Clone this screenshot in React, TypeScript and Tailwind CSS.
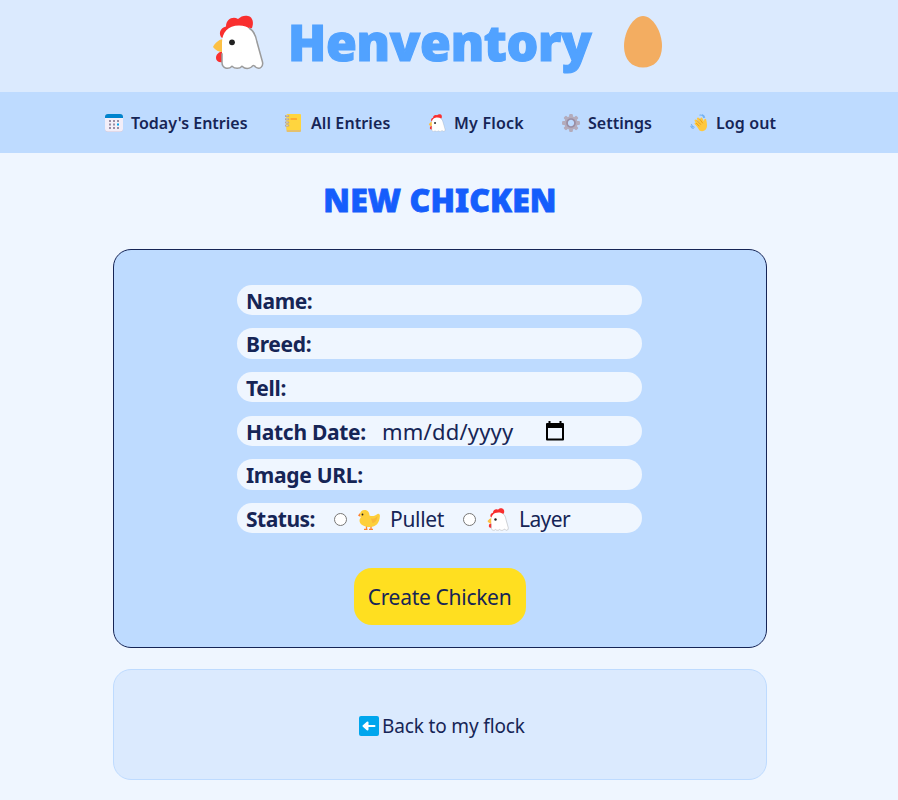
import React from "react";

type IconProps = { className?: string };

function Hen({ className, outline = 1 }: IconProps & { outline?: number }) {
  return (
    <svg viewBox="0 0 52 55" className={className}>
      <path d="M11 47c-4 1-7-1-7-4 0-4 3-6 7-7z" fill="#f92f2f" />
      <path d="M11 24C6 25 3 28 1 32c2 3 6 5 10 5z" fill="#fcc044" />
      <path d="M10 23C6 19 8 13 14 11.500 14 4 21 1 26 4c3-3 7-4 10-3 5 1 6 7 4 12L26 17z" fill="#f92f2f" />
      <path
        d="M10 28C10 17 16 10.500 27 10.500c10 0 15 6 17 15l6.500 21c1 5-3 8-7 5.500-1.500-1-2.500-1.500-4 0-3 2.500-6.500 2.500-9.500-.5-2.500 3-7 3-10 0-4 4-10 2-10-4z"
        fill="#fff"
      />
      <path
        d="M37 13c5 3 7 8 8 14l5.500 20c1 5-3 8-7 5-1.500-2-2.500-2-4 0-3 2-6.500 2-9.500-.8-2.500 2.800-7 2.800-10 0-4 4-10 2-10-4v-9"
        fill="none"
        stroke="#9b9b9b"
        strokeWidth={outline}
      />
      <circle cx="20" cy="27.300" r="2.900" fill="#212121" />
    </svg>
  );
}

function Egg({ className }: IconProps) {
  return (
    <svg viewBox="0 0 38 52" className={className}>
      <path d="M19 0c10 0 19 16 19 30 0 14-8 21.500-19 21.500S0 44 0 30C0 16 9 0 19 0z" fill="#f3ad61" />
    </svg>
  );
}

function Calendar({ className }: IconProps) {
  return (
    <svg viewBox="0 0 18 18" className={className}>
      <rect width="18" height="18" rx="3" fill="#cfc5d9" />
      <path d="M0 4h18v10.500a3 3 0 0 1-3 3H3a3 3 0 0 1-3-3z" fill="#f3eef8" />
      <path d="M0 4V3a3 3 0 0 1 3-3h12a3 3 0 0 1 3 3v1z" fill="#0084ce" />
      <path
        d="M8 6h2v2H8zM12 6h2v2h-2zM4 6h2v2H4zM4 9.500h2v2H4zM8 9.500h2v2H8zM4 13h2v2H4zM8 13h2v2H8zM12 13h2v2h-2z"
        fill="#998ea4"
      />
      <path d="M12 9.500h2v2h-2z" fill="#00a6ed" />
    </svg>
  );
}

function Ledger({ className }: IconProps) {
  return (
    <svg viewBox="0 0 18 18" className={className}>
      <rect x="1.500" y="2" width="14.500" height="16" rx="1" fill="#e5c16d" />
      <rect x="1.500" y="0" width="14.500" height="16" rx="1" fill="#ffd53e" />
      <rect x="5.500" y="4" width="6.500" height="2" rx=".5" fill="#ffab2e" />
      <path d="M.8 2h2.500M.8 5.200h2.500M.8 8.400h2.500M.8 11.600h2.500" stroke="#b3a58f" strokeWidth="2" strokeLinecap="round" />
      <path d="M.8 1.800h2.500M.8 5h2.500M.8 8.200h2.500M.8 11.400h2.500" stroke="#d9d4d6" strokeWidth=".8" />
    </svg>
  );
}

function Gear({ className }: IconProps) {
  return (
    <svg viewBox="-9 -9 18 18" className={className}>
      {[0, 45, 90, 135].map((a) => (
        <rect key={a} x="-1.900" y="-9" width="3.800" height="18" rx="1.200" fill="#b4acbc" transform={`rotate(${a})`} />
      ))}
      <circle r="6.700" fill="#b4acbc" />
      <circle r="4" fill="#bedbff" stroke="#998ea4" strokeWidth="1.700" />
    </svg>
  );
}

function Wave({ className }: IconProps) {
  return (
    <svg viewBox="0 0 19 19" className={className}>
      <path d="M10.500 1.200q3-.5 4 2.500M13 .7q2.200.8 2.500 3M1.500 11q.5 2.500 3 3M.8 13q1 2 2.700 2.200" fill="none" stroke="#74b2f3" strokeWidth="1.100" strokeLinecap="round" />
      <path d="M6 10l4 4M6 7l6 6M8.500 5l5 6M12 5l2.500 5" stroke="#ffc83d" strokeWidth="2.400" strokeLinecap="round" />
      <path d="M6 11L14.500 8q.5-4 2.500-2.500.7 2.500 1 6.500c0 5.500-4.500 7.500-8 5.500z" fill="#ffc83d" />
      <path d="M7.500 6.800l4 4.500M10 5l3.500 4.800M6.500 9.500l3.500 3.500" stroke="#d67d00" strokeWidth=".6" />
    </svg>
  );
}

function Chick({ className }: IconProps) {
  return (
    <svg viewBox="0 0 22 20" className={className}>
      <path d="M8.500 16v3M13 16v3M6 19.300h3.500M11 19.300h4" stroke="#ff822d" strokeWidth="1.300" fill="none" />
      <path d="M2 3L0 5.500 2.500 7z" fill="#ff822d" />
      <path
        d="M2 4.500C2 2 4 0 6.500 0 10 0 11.500 2.500 11.500 5.500c3 1.500 6 0 8-1.500 1.500-.7 2.500.5 2.400 2C21.500 13 18 17 12 17 6 17 2 14.500 1.500 11 1.300 8.500 3 8 2.800 7z"
        fill="#fdcf3b"
      />
      <path d="M13 8.500c3 .5 5-.5 6.500-2.500-.5 5-3 7-5 7" fill="#f9b938" />
      <circle cx="4.500" cy="4.500" r=".9" fill="#212121" />
    </svg>
  );
}

function BackArrow({ className }: IconProps) {
  return (
    <svg viewBox="0 0 20 20" className={className}>
      <rect width="20" height="20" rx="2" fill="#00a6ed" />
      <path d="M8.500 6.500v7L4.500 10zM8 10h7.500" stroke="#fff" strokeWidth="2" fill="#fff" strokeLinecap="round" strokeLinejoin="round" />
    </svg>
  );
}

function DateIcon({ className }: IconProps) {
  return (
    <svg viewBox="0 0 20 20" className={className}>
      <path d="M3.500 0h2v2h9V0h2v2H18a1 1 0 0 1 1 1v15.500a1 1 0 0 1-1 1H2a1 1 0 0 1-1-1V3a1 1 0 0 1 1-1h1.500zM3 7v10.500h14V7z" fill="#000" fillRule="evenodd" />
    </svg>
  );
}

const icon = "size-[18px] shrink-0";

const links = [
  { label: "Today's Entries", glyph: <Calendar className={icon} />, width: "w-[116px] tracking-[0px]" },
  { label: "All Entries", glyph: <Ledger className={icon} />, width: "w-[79px] tracking-[0.1px]" },
  { label: "My Flock", glyph: <Hen className={icon} outline={0.8} />, width: "w-[70px] tracking-[0.2px]" },
  { label: "Settings", glyph: <Gear className={icon} />, width: "w-[64px] tracking-[0px]" },
  { label: "Log out", glyph: <Wave className={icon} />, width: "w-[61px] tracking-[0.1px]" },
];

function Field({ label, track, children }: { label: string; track: string; children?: React.ReactNode }) {
  return (
    <div className="flex h-[30.4px] w-[405px] items-center rounded-full bg-blue-50 pl-[9px] text-[21px] leading-[30px] whitespace-nowrap">
      <span className={"mt-[1.600px] font-bold " + track}>{label}</span>
      {children}
    </div>
  );
}

export default function App() {
  return (
    <div className="h-[800px] overflow-hidden bg-blue-50 font-['Noto_Sans','Open_Sans',sans-serif] text-blue-950">
      <header className="flex h-[92px] bg-blue-100 pl-[212px]">
        <Hen className="mt-[15px] h-[55px] w-[52px]" outline={1.5} />
        <h1 className="ml-[24px] w-[304px] text-[50px] leading-[84px] font-black tracking-[-0.3px] whitespace-nowrap text-blue-400 [-webkit-text-stroke:1.2px_#51a2ff]">
          Henventory
        </h1>
        <Egg className="mt-[16px] ml-[32px] h-[52px] w-[38px]" />
      </header>
      <nav className="flex h-[61px] items-center gap-[38px] bg-blue-200 pl-[105px] text-[16px] font-semibold">
        {links.map((l) => (
          <a key={l.label} className="flex items-center gap-2">
            {l.glyph}
            <span className={"whitespace-nowrap " + l.width}>{l.label}</span>
          </a>
        ))}
      </nav>
      <main className="flex w-[880px] flex-col items-center">
        <h2 className="mt-[22px] h-[74px] text-[32px] leading-[50px] font-black tracking-[0.1px] whitespace-nowrap text-blue-600 [-webkit-text-stroke:0.8px_#155dfc]">
          NEW CHICKEN
        </h2>
        <form className="flex h-[399px] w-[654px] flex-col items-center rounded-[18px] border border-blue-950 bg-blue-200 pt-[34.800px]">
          <div className="mr-px flex flex-col gap-[13.200px]">
            <Field label="Name:" track="w-[67px] tracking-[-0.5px]" />
            <Field label="Breed:" track="w-[67px] tracking-[-0.3px]" />
            <Field label="Tell:" track="w-[42px] tracking-[-0.3px]" />
            <Field label="Hatch Date:" track="w-[136px] tracking-[-0.3px]">
              <span className="mt-[1px] w-[163px] text-[22px] tracking-[0.2px]">mm/dd/yyyy</span>
              <DateIcon className="size-5" />
            </Field>
            <Field label="Image URL:" track="w-[118px] tracking-[-0.3px]" />
            <Field label="Status:" track="w-[88px] tracking-[-0.5px]">
              <input type="radio" name="status" className="mt-[3px] size-[13px]" />
              <Chick className="mt-[4px] ml-[11px] h-5 w-[22px]" />
              <span className="mt-[2px] ml-[10px] w-[73px] tracking-[-0.3px]">Pullet</span>
              <input type="radio" name="status" className="mt-[3px] size-[13px]" />
              <Hen className="mt-[3px] ml-[11px] h-[23px] w-[22px]" />
              <span className="mt-[2px] ml-[10px] tracking-[-0.6px]">Layer</span>
            </Field>
          </div>
          <button type="button" className="mt-[35px] mr-px h-[57px] w-[172px] rounded-[18px] bg-yellow-300 pt-[2px] text-[21px] tracking-[-0.3px] whitespace-nowrap">
            Create Chicken
          </button>
        </form>
        <section className="mt-[21px] flex h-[111px] w-[654px] items-center rounded-[18px] border border-blue-200 bg-blue-100 pl-[244.500px]">
          <BackArrow className="mt-[3px] size-5" />
          <a className="mt-[3px] ml-[3.500px] text-[19px] tracking-[-0.150px] whitespace-nowrap">Back to my flock</a>
        </section>
      </main>
    </div>
  );
}
